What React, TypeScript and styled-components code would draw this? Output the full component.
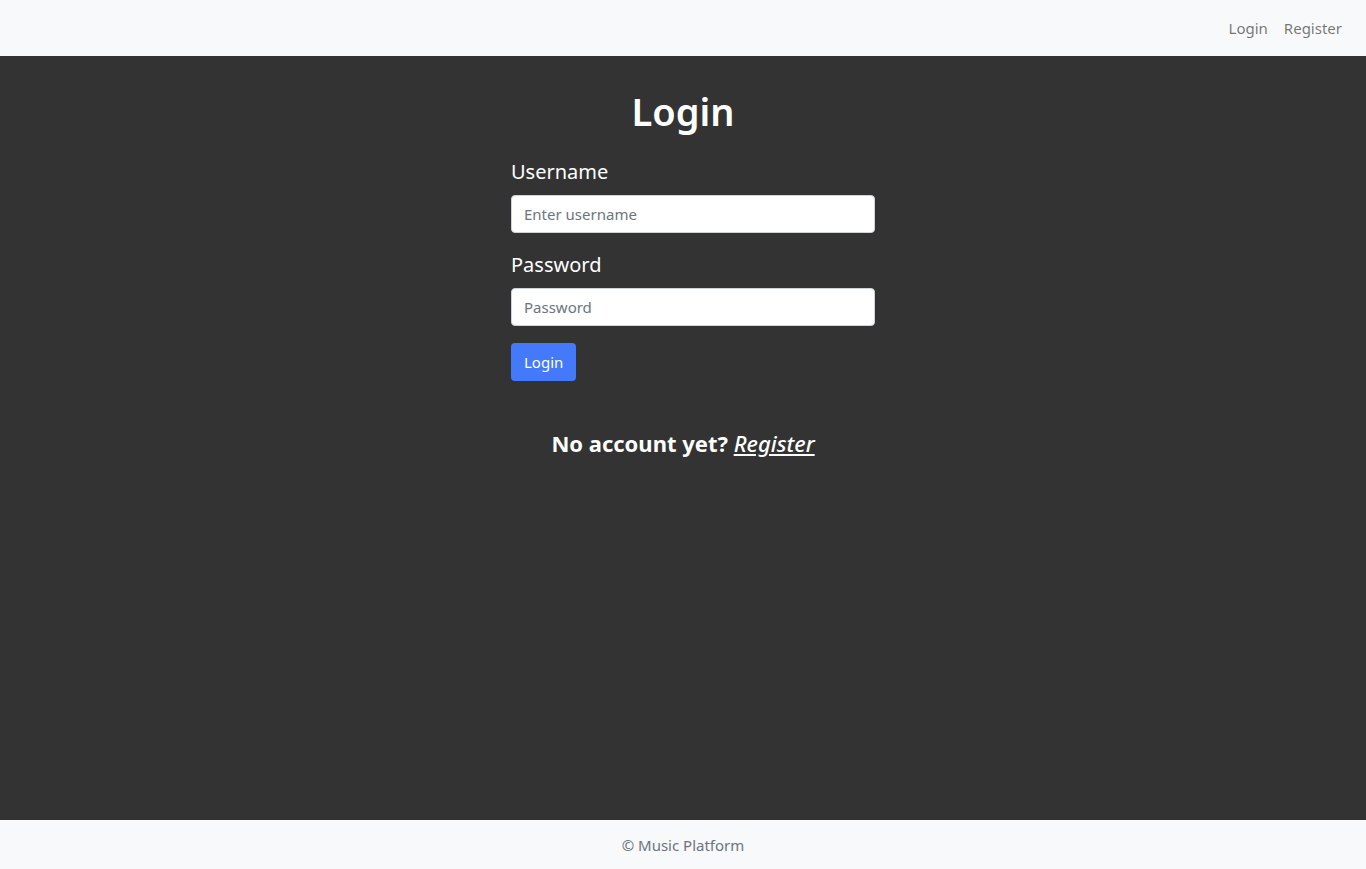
import React from "react";
import styled, { createGlobalStyle } from "styled-components";

const Global = createGlobalStyle`
  html, body { margin: 0; padding: 0; height: 100%; }
  body {
    font-family: "Noto Sans", "Open Sans", sans-serif;
    font-size: 16px;
    line-height: 1.5;
    color: #212529;
    background: #333333;
  }
  #root { min-height: 100vh; display: flex; flex-direction: column; }
  * { box-sizing: border-box; }
`;

const NavBar = styled.nav`
  height: 56px;
  background: #f8f9fa;
  display: flex;
  align-items: center;
  justify-content: flex-end;
  padding: 0 16px;
`;

const NavLink = styled.a`
  color: rgba(0, 0, 0, 0.55);
  text-decoration: none;
  padding: 0 8px;
  font-size: 15px;
  cursor: pointer;
`;

const Main = styled.main`
  flex: 1;
  background: #333333;
  display: flex;
  flex-direction: column;
  align-items: center;
  padding-top: 33px;
`;

const Title = styled.h1`
  margin: 0 0 22px;
  font-size: 38px;
  font-weight: 600;
  line-height: 1.2;
  color: #ffffff;
`;

const Form = styled.form`
  width: 384px;
  padding-left: 20px;
  display: flex;
  flex-direction: column;
`;

const Field = styled.div`
  display: flex;
  flex-direction: column;
  margin-bottom: 17px;
`;

const Label = styled.label`
  color: #ffffff;
  font-size: 20px;
  line-height: 30px;
  margin-bottom: 8px;
`;

const Input = styled.input`
  height: 38px;
  width: 100%;
  border: 1px solid #ced4da;
  border-radius: 4px;
  background: #fff;
  padding: 6px 12px;
  font-family: inherit;
  font-size: 15px;
  color: #212529;
  &::placeholder { color: #6c757d; }
`;

const Button = styled.button`
  align-self: flex-start;
  height: 38px;
  padding: 0 13px;
  border: none;
  border-radius: 4px;
  background: #4479fa;
  color: #fff;
  font-family: inherit;
  font-size: 15px;
  cursor: pointer;
`;

const Prompt = styled.p`
  margin: 46px 0 0;
  color: #fff;
  font-size: 22px;
  font-weight: 700;
`;

const PromptLink = styled.a`
  color: #fff;
  font-style: italic;
  text-decoration: underline;
  font-weight: 500;
`;

const Footer = styled.footer`
  height: 49px;
  padding-top: 2px;
  background: #f8f9fa;
  display: flex;
  align-items: center;
  justify-content: center;
  color: #6c757d;
  font-size: 15px;
`;

export default function App() {
  return (
    <>
      <Global />
      <NavBar>
        <NavLink>Login</NavLink>
        <NavLink>Register</NavLink>
      </NavBar>
      <Main>
        <Title>Login</Title>
        <Form onSubmit={(e) => e.preventDefault()}>
          <Field>
            <Label htmlFor="username">Username</Label>
            <Input id="username" placeholder="Enter username" />
          </Field>
          <Field>
            <Label htmlFor="password">Password</Label>
            <Input id="password" type="password" placeholder="Password" />
          </Field>
          <Button type="submit">Login</Button>
        </Form>
        <Prompt>
          No account yet? <PromptLink>Register</PromptLink>
        </Prompt>
      </Main>
      <Footer>© Music Platform</Footer>
    </>
  );
}
